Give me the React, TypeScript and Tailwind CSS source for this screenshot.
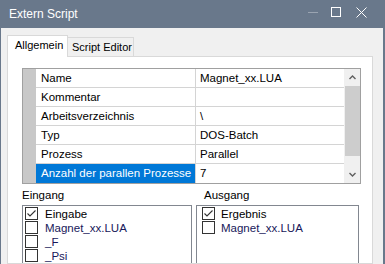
import React from "react";

const font = { fontFamily: '"Liberation Sans", Arial, sans-serif' };

function Check({ checked }: { checked?: boolean }) {
  return (
    <svg width="13" height="13" viewBox="0 0 13 13" className="shrink-0">
      <rect x="0.5" y="0.5" width="12" height="12" fill="#fff" stroke="#333" />
      {checked && (
        <polyline points="2.5,6.5 5,9 10.5,3.5" fill="none" stroke="#333" strokeWidth="1.1" />
      )}
    </svg>
  );
}

function Item({ label, checked, gap }: { label: string; checked?: boolean; gap: string }) {
  return (
    <div className={`flex h-[14px] items-start ${gap}`}>
      <Check checked={checked} />
      <span className={`leading-[14px] whitespace-nowrap ${checked ? "text-black" : "text-[#18185a]"}`}>{label}</span>
    </div>
  );
}

const rows: [string, string][] = [
  ["Name", "Magnet_xx.LUA"],
  ["Kommentar", ""],
  ["Arbeitsverzeichnis", "\\"],
  ["Typ", "DOS-Batch"],
  ["Prozess", "Parallel"],
  ["Anzahl der parallen Prozesse", "7"],
];

export default function App() {
  return (
    <div
      className="w-[385px] h-[264px] overflow-hidden bg-[#f0f0f0] border-l border-r-2 border-[#69788b] flex flex-col text-[11.5px] text-black"
      style={font}
    >
      <div className="h-[28px] shrink-0 bg-[#69788b] flex items-start">
        <span className="text-white text-[12px] leading-[28px] pl-[8px] whitespace-nowrap">Extern Script</span>
        <div className="ml-auto flex items-start mt-[7px] pr-[16px]">
          <svg width="10" height="10" viewBox="0 0 10 10">
            <line x1="0" y1="5.5" x2="10" y2="5.5" stroke="#9aa4b1" />
          </svg>
          <svg width="10" height="10" viewBox="0 0 10 10" className="ml-[13px]">
            <rect x="0.5" y="0.5" width="9" height="9" fill="none" stroke="#fff" />
          </svg>
          <svg width="11" height="11" viewBox="0 0 11 11" className="ml-[15px]">
            <line x1="0.5" y1="0.5" x2="10.5" y2="10.5" stroke="#fff" />
            <line x1="10.5" y1="0.5" x2="0.5" y2="10.5" stroke="#fff" />
          </svg>
        </div>
      </div>

      <div className="flex-1 flex flex-col pl-[6px] pr-[10px] pt-[7px] min-h-0">
        <div className="h-[21px] shrink-0 flex items-end relative z-10 text-[11px]">
          <div className="w-[61px] h-[22px] -mb-px bg-white border border-b-0 border-[#d9d9d9] pl-[7px] leading-[18px] whitespace-nowrap">
            Allgemein
          </div>
          <div className="w-[66px] h-[19px] bg-[#f0f0f0] border-t border-r border-[#d9d9d9] pl-[4px] leading-[18px] whitespace-nowrap overflow-hidden">
            Script Editor
          </div>
        </div>

        <div className="flex-1 bg-white border border-[#d9d9d9] pl-[14px] pt-[11px] overflow-hidden">
          <div className="w-[339px] h-[116px] border border-[#a0a0a0] flex">
            <div className="w-[13px] bg-[#c8c8c8]" />
            <div className="flex-1 flex flex-col">
              {rows.map(([k, v], i) => {
                const sel = i === rows.length - 1;
                return (
                  <div
                    key={k}
                    className={`h-[19px] flex ${i < rows.length - 1 ? "border-b border-[#d4d4d4]" : ""}`}
                  >
                    <div
                      className={`w-[159px] pl-[5px] leading-[19px] whitespace-nowrap ${
                        sel ? "bg-[#0078d7] text-white" : ""
                      }`}
                    >
                      {k}
                    </div>
                    <div className="flex-1 border-l border-[#d4d4d4] pl-[4px] leading-[19px] whitespace-nowrap">{v}</div>
                  </div>
                );
              })}
            </div>
            <div className="w-[16px] bg-[#f0f0f0] flex flex-col">
              <div className="h-[17px] flex items-center justify-center">
                <svg width="7" height="5" viewBox="0 0 7 5">
                  <polyline points="0.5,4 3.5,1 6.5,4" fill="none" stroke="#606060" strokeWidth="1.4" />
                </svg>
              </div>
              <div className="h-[70px] ml-px bg-[#cdcdcd]" />
              <div className="flex-1" />
              <div className="h-[17px] flex items-center justify-center">
                <svg width="7" height="5" viewBox="0 0 7 5">
                  <polyline points="0.5,1 3.5,4 6.5,1" fill="none" stroke="#606060" strokeWidth="1.4" />
                </svg>
              </div>
            </div>
          </div>

          <div className="flex h-[17px] mt-[4px] leading-[14px]">
            <span className="w-[174px]">Eingang</span>
            <span className="pl-[8px]">Ausgang</span>
          </div>

          <div className="flex gap-[4px] h-[80px]">
            <div className="w-[170px] border border-[#828790] bg-white pt-[1px] pl-[2px]">
              <Item label="Eingabe" checked gap="gap-[7px]" />
              <Item label="Magnet_xx.LUA" gap="gap-[7px]" />
              <Item label="_F" gap="gap-[7px]" />
              <Item label="_Psi" gap="gap-[7px]" />
            </div>
            <div className="w-[163px] border border-[#828790] bg-white pt-[1px] pl-[5px]">
              <Item label="Ergebnis" checked gap="gap-[6px]" />
              <Item label="Magnet_xx.LUA" gap="gap-[6px]" />
            </div>
          </div>
        </div>
      </div>
    </div>
  );
}
